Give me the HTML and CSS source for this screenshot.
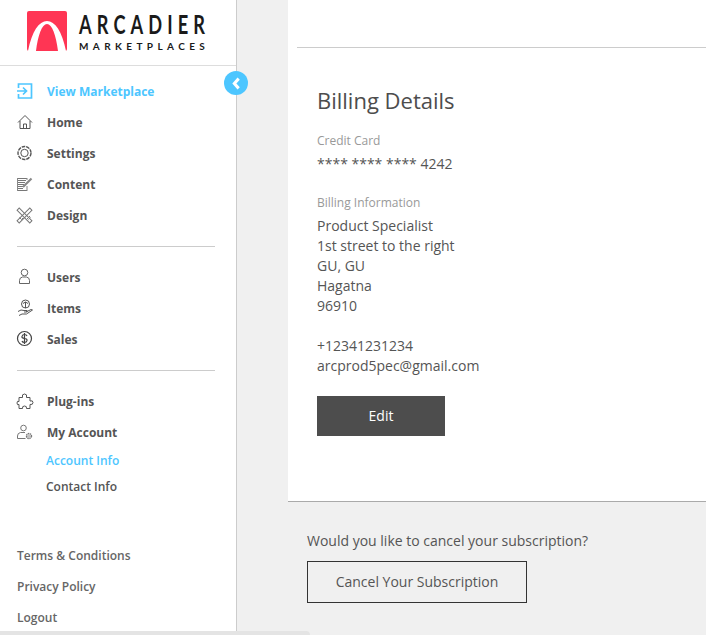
FILE: index.html
```html
<!DOCTYPE html>
<html lang="en">
<head>
    <meta charset="UTF-8">
    <meta name="viewport" content="width=device-width, initial-scale=1.0">
    <title>Billing Details</title>
    <link rel="stylesheet" href="styles.css">
</head>
<body>

    <div class="page">
        <!-- Sidebar -->
        <aside class="sidebar">
            <div class="logo">
                <svg class="logo-mark" viewBox="0 0 40 40" width="40" height="40">
                    <rect width="40" height="40" rx="2" fill="#ff3554"/>
                    <path d="M1 40C5 20 12 10 20 10S35 20 39 40H31C29 24 25 13 20 13S11 24 9 40Z" fill="#fff"/>
                </svg>
                <div class="logo-text">
                    <div class="logo-name">ARCADIER</div>
                    <div class="logo-sub">MARKETPLACES</div>
                </div>
            </div>

            <a class="toggle">
                <svg viewBox="0 0 10 12" width="11" height="13"><path d="M7 1.500 3 6l4 4.500" fill="none" stroke="#fff" stroke-width="2.800"/></svg>
            </a>

            <nav class="nav">
                <a class="nav-item active">
                    <svg class="icon" viewBox="0 0 18 19"><path d="M2.500 7V3h13v14h-13v-4M1 10h9.500M7 6.500l3.500 3.500L7 13.500" fill="none" stroke="#4dc6ff" stroke-width="1.700"/></svg>
                    View Marketplace
                </a>
                <a class="nav-item">
                    <svg class="icon" viewBox="0 0 18 19"><path d="M2 10.500 9 3.500l7 7M4 9v7.500h10V9M7.500 16.500V12h3v4.500" fill="none" stroke="#555"/></svg>
                    Home
                </a>
                <a class="nav-item">
                    <svg class="icon" viewBox="0 0 18 19"><circle cx="8.500" cy="10" r="3.700" fill="none" stroke="#555"/><circle cx="8.500" cy="10" r="6.500" fill="none" stroke="#555" stroke-width="1.400" stroke-dasharray="3.600 .9"/></svg>
                    Settings
                </a>
                <a class="nav-item">
                    <svg class="icon" viewBox="0 0 18 19"><path d="M1 4.500h10M1 6.500h9M1 8.500h8M1 10.500h7M1 12.500h6M1 14.500h6M1 16.500h10" stroke="#777"/><path d="M1.500 4v13M11 4v2M11 12v5" stroke="#888"/><path d="M7 13 15.500 4.500" stroke="#888" stroke-width="2.200"/></svg>
                    Content
                </a>
                <a class="nav-item">
                    <svg class="icon" viewBox="0 0 18 19"><g fill="none" stroke="#777"><rect x="-.5" y="9" width="18" height="3" transform="rotate(45 8.500 10.500)"/><rect x="-.5" y="9" width="18" height="3" transform="rotate(-45 8.500 10.500)"/></g><path d="M3.500 12.500l2 2M5.500 14.500l1.500-1.500M11 13l1.500 1.500M13 11l1.500 1.500" stroke="#777"/></svg>
                    Design
                </a>

                <hr class="divider">

                <a class="nav-item">
                    <svg class="icon" viewBox="0 0 18 19"><circle cx="8.500" cy="5.500" r="3.300" fill="none" stroke="#666"/><path d="M3.500 16.500v-3q0-3 3-3.500h4q3 .5 3 3.500v3Z" fill="none" stroke="#666"/></svg>
                    Users
                </a>
                <a class="nav-item">
                    <svg class="icon" viewBox="0 0 18 19"><circle cx="9.500" cy="6" r="4" fill="none" stroke="#555"/><path d="M7 5.500 9.500 4 12 5.500M9.500 4v6" fill="none" stroke="#555"/><path d="M2 13.500q3-2.500 6-1h3q1 1-1 1.500H8M10 14l5-2.500 1.500.5-6 4H6l-3 1.500" fill="none" stroke="#555"/></svg>
                    Items
                </a>
                <a class="nav-item">
                    <svg class="icon" viewBox="0 0 18 19"><circle cx="8.500" cy="9.500" r="7" fill="none" stroke="#444" stroke-width="1.200"/><path d="M11 7Q10.500 5.500 8.500 5.500T6 7.300 8.500 9.500t2.500 2.200-2.500 1.800T6 12M8.500 4v11" fill="none" stroke="#444" stroke-width="1.200"/></svg>
                    Sales
                </a>

                <hr class="divider">

                <a class="nav-item">
                    <svg class="icon" viewBox="0 0 18 19"><path d="M3 6.500H6.500Q5.500 3 8.500 3T10.500 6.500H14V10Q17 9 17 11.500T14 13.500V17.500H10.500Q11 15 8.500 15T6.500 17.500H3V13.500Q1 14.500 1 12T3 10.500Z" fill="none" stroke="#555"/></svg>
                    Plug-ins
                </a>
                <a class="nav-item">
                    <svg class="icon" viewBox="0 0 18 19"><circle cx="7.500" cy="6" r="2.800" fill="none" stroke="#777"/><path d="M1.500 16.500V14q0-3 3-3.500h4.500M1.500 16.500h8" fill="none" stroke="#777"/><circle cx="13" cy="14" r="2.400" fill="none" stroke="#777" stroke-width="1.600" stroke-dasharray="1.300 .5"/><circle cx="13" cy="14" r=".8" fill="#777"/></svg>
                    My Account
                </a>
                <a class="sub-item active">Account Info</a>
                <a class="sub-item">Contact Info</a>
            </nav>

            <div class="side-footer">
                <a>Terms &amp; Conditions</a>
                <a>Privacy Policy</a>
                <a>Logout</a>
            </div>
        </aside>

        <!-- Main content -->
        <main class="main">
            <section class="panel">
                <div class="panel-top"></div>
                <div class="billing">
                    <h1>Billing Details</h1>

                    <div class="field-label">Credit Card</div>
                    <div class="card-number">**** **** **** 4242</div>

                    <div class="field-label info-label">Billing Information</div>
                    <div class="address">
                        Product Specialist<br>
                        1st street to the right<br>
                        GU, GU<br>
                        Hagatna<br>
                        96910<br>
                        <br>
                        +12341231234<br>
                        arcprod5pec@gmail.com
                    </div>

                    <button type="button" class="edit-btn">Edit</button>
                </div>
            </section>

            <section class="cancel">
                <p>Would you like to cancel your subscription?</p>
                <button type="button" class="cancel-btn">Cancel Your Subscription</button>
            </section>
        </main>
    </div>

    <div class="scrollbar"></div>

</body>
</html>
```

FILE: styles.css
```css
html, body {
    margin: 0;
    height: 100%;
    overflow: hidden;
}
body {
    font-family: "Open Sans", sans-serif;
    background-color: #f0f0f0;
    color: #555;
    position: relative;
}
.page {
    display: flex;
    height: 635px;
}
.sidebar {
    position: relative;
    width: 236px;
    height: 631px;
    flex-shrink: 0;
    background-color: #fff;
    border-right: 1px solid #ccc;
}
.logo {
    display: flex;
    align-items: flex-start;
    gap: 12px;
    height: 54px;
    padding: 11px 0 0 27px;
    border-bottom: 1px solid #ddd;
}
.logo-mark {
    display: block;
    flex-shrink: 0;
}
.logo-text {
    font-family: Lato, sans-serif;
    color: #1a1a1a;
}
.logo-name {
    font-size: 26px;
    line-height: 26px;
    font-weight: 700;
    letter-spacing: 7.300px;
    white-space: nowrap;
    transform: scaleX(.7);
    transform-origin: left center;
}
.logo-sub {
    font-size: 10px;
    line-height: 12px;
    margin-top: 3px;
    font-weight: 700;
    letter-spacing: 4.400px;
    white-space: nowrap;
}
.toggle {
    position: absolute;
    left: 224px;
    top: 71px;
    width: 24px;
    height: 24px;
    border-radius: 50%;
    background-color: #4dc6ff;
    display: flex;
    align-items: center;
    justify-content: center;
}
.nav {
    padding-top: 10px;
}
.nav-item {
    display: flex;
    align-items: center;
    height: 31px;
    padding-left: 16px;
    font-size: 12px;
    font-weight: 700;
    color: #555;
}
.nav-item.active {
    color: #4dc6ff;
}
.icon {
    width: 18px;
    height: 19px;
    margin: 0 13px 2px 0;
    flex-shrink: 0;
}
.divider {
    border: none;
    border-top: 1px solid #ccc;
    margin: 15px 21px 15px 17px;
}
.sub-item {
    display: block;
    padding-left: 46px;
    font-size: 12px;
    line-height: 26px;
    font-weight: 600;
    color: #555;
}
.sub-item.active {
    color: #4dc6ff;
}
.side-footer {
    position: absolute;
    left: 17px;
    top: 540px;
    font-size: 12px;
    font-weight: 600;
    color: #666;
}
.side-footer a {
    display: block;
    height: 31px;
    line-height: 31px;
}
.main {
    flex: 1;
    padding-left: 51px;
}
.panel {
    background-color: #fff;
    height: 501px;
    border-bottom: 1px solid #aaa;
}
.panel-top {
    height: 47px;
    margin-left: 9px;
    border-bottom: 1px solid #ccc;
}
.billing {
    padding: 36px 0 0 29px;
}
h1 {
    margin: 0;
    font-size: 22px;
    line-height: 32px;
    font-weight: 400;
    color: #4d4d4d;
}
.field-label {
    font-size: 12px;
    line-height: 18px;
    color: #999;
    margin-top: 16px;
}
.card-number {
    font-size: 14px;
    line-height: 20px;
    margin-top: 4px;
}
.info-label {
    margin-top: 20px;
}
.address {
    margin-top: 4px;
    font-size: 14px;
    line-height: 20px;
}
.edit-btn {
    display: block;
    margin-top: 20px;
    width: 128px;
    height: 40px;
    padding-bottom: 3px;
    border: none;
    background-color: #4d4d4d;
    color: #fff;
    font-family: inherit;
    font-size: 14px;
}
.cancel {
    padding: 29px 0 0 19px;
}
.cancel p {
    margin: 0;
    font-size: 14px;
    line-height: 20px;
}
.cancel-btn {
    display: block;
    margin-top: 10px;
    width: 220px;
    height: 42px;
    padding-bottom: 3px;
    background: transparent;
    border: 1px solid #333;
    color: #555;
    font-family: inherit;
    font-size: 14px;
}
.scrollbar {
    position: absolute;
    left: 0;
    bottom: 0;
    width: 310px;
    height: 4px;
    background-color: #e4e4e4;
    border-radius: 0 4px 0 0;
}
```
